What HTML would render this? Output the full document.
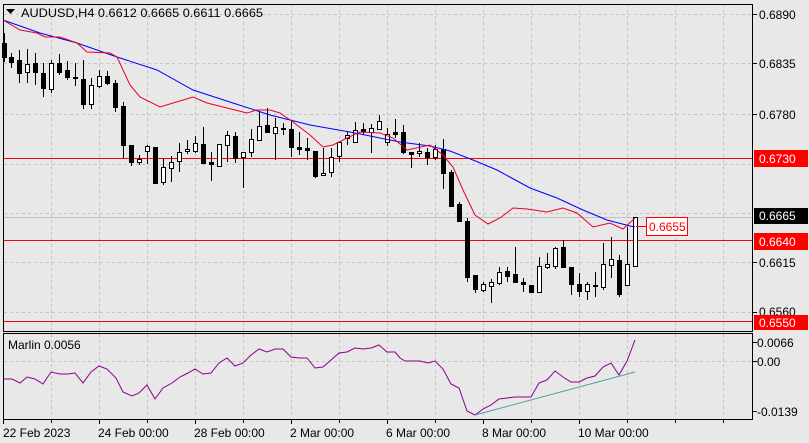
<!DOCTYPE html>
<html><head><meta charset="utf-8"><style>
html,body{margin:0;padding:0;background:#e8e8e8;width:809px;height:443px;overflow:hidden}
svg{display:block}
text{font-family:"Liberation Sans","DejaVu Sans",sans-serif;font-size:12px}
</style></head><body>
<svg width="809" height="443" viewBox="0 0 809 443" xmlns="http://www.w3.org/2000/svg">
<rect width="809" height="443" fill="#e8e8e8"/>
<g stroke="#c4c4c4" stroke-width="1" stroke-dasharray="3,3" shape-rendering="crispEdges">
<line x1="51.5" y1="4" x2="51.5" y2="419"/><line x1="99.5" y1="4" x2="99.5" y2="419"/><line x1="147.5" y1="4" x2="147.5" y2="419"/><line x1="195.5" y1="4" x2="195.5" y2="419"/><line x1="243.5" y1="4" x2="243.5" y2="419"/><line x1="291.5" y1="4" x2="291.5" y2="419"/><line x1="339.5" y1="4" x2="339.5" y2="419"/><line x1="387.5" y1="4" x2="387.5" y2="419"/><line x1="435.5" y1="4" x2="435.5" y2="419"/><line x1="483.5" y1="4" x2="483.5" y2="419"/><line x1="531.5" y1="4" x2="531.5" y2="419"/><line x1="579.5" y1="4" x2="579.5" y2="419"/><line x1="627.5" y1="4" x2="627.5" y2="419"/><line x1="675.5" y1="4" x2="675.5" y2="419"/><line x1="723.5" y1="4" x2="723.5" y2="419"/>
<line x1="4" y1="14.5" x2="752" y2="14.5"/><line x1="4" y1="63.5" x2="752" y2="63.5"/><line x1="4" y1="114.5" x2="752" y2="114.5"/><line x1="4" y1="164.5" x2="752" y2="164.5"/><line x1="4" y1="213.5" x2="752" y2="213.5"/><line x1="4" y1="262.5" x2="752" y2="262.5"/><line x1="4" y1="312.5" x2="752" y2="312.5"/>
<line x1="4" y1="361.5" x2="752" y2="361.5"/>
</g>
<line x1="4" y1="217.5" x2="752" y2="217.5" stroke="#c0c0c0" shape-rendering="crispEdges"/>
<g stroke="#ff0000" stroke-width="1" shape-rendering="crispEdges">
<line x1="4" y1="158.5" x2="752" y2="158.5"/>
<line x1="4" y1="240.5" x2="752" y2="240.5"/>
<line x1="4" y1="321.5" x2="752" y2="321.5"/>
</g>
<g stroke="#000" stroke-width="1" shape-rendering="crispEdges">
<line x1="4.5" y1="33" x2="4.5" y2="62"/><rect x="2.5" y="43.5" width="4" height="14" fill="#000"/>
<line x1="11.5" y1="53" x2="11.5" y2="68"/><rect x="9.5" y="57.5" width="4" height="5" fill="#000"/>
<line x1="19.5" y1="50" x2="19.5" y2="83"/><rect x="17.5" y="60.5" width="4" height="13" fill="#000"/>
<line x1="27.5" y1="49" x2="27.5" y2="83"/><rect x="25.5" y="64.5" width="4" height="8" fill="#fff"/>
<line x1="35.5" y1="53" x2="35.5" y2="85"/><rect x="33.5" y="63.5" width="4" height="9" fill="#000"/>
<line x1="43.5" y1="63" x2="43.5" y2="97"/><rect x="41.5" y="73.5" width="4" height="15" fill="#000"/>
<line x1="51.5" y1="60" x2="51.5" y2="93"/><rect x="49.5" y="63.5" width="4" height="26" fill="#fff"/>
<line x1="59.5" y1="54" x2="59.5" y2="75"/><rect x="57.5" y="63.5" width="4" height="9" fill="#000"/>
<line x1="67.5" y1="61" x2="67.5" y2="80"/><rect x="65.5" y="70.5" width="4" height="7" fill="#000"/>
<line x1="75.5" y1="63" x2="75.5" y2="86"/><rect x="73.5" y="77.5" width="4" height="1" fill="#000"/>
<line x1="83.5" y1="60" x2="83.5" y2="109"/><rect x="81.5" y="79.5" width="4" height="25" fill="#000"/>
<line x1="91.5" y1="78" x2="91.5" y2="109"/><rect x="89.5" y="85.5" width="4" height="19" fill="#fff"/>
<line x1="99.5" y1="70" x2="99.5" y2="88"/><rect x="97.5" y="76.5" width="4" height="10" fill="#fff"/>
<line x1="107.5" y1="71" x2="107.5" y2="85"/><rect x="105.5" y="76.5" width="4" height="7" fill="#000"/>
<line x1="115.5" y1="80" x2="115.5" y2="112"/><rect x="113.5" y="83.5" width="4" height="24" fill="#000"/>
<line x1="123.5" y1="102" x2="123.5" y2="158"/><rect x="121.5" y="106.5" width="4" height="39" fill="#000"/>
<line x1="131.5" y1="145" x2="131.5" y2="166"/><rect x="129.5" y="145.5" width="4" height="17" fill="#000"/>
<line x1="139.5" y1="155" x2="139.5" y2="165"/><rect x="137.5" y="159.5" width="4" height="3" fill="#fff"/>
<line x1="147.5" y1="145" x2="147.5" y2="164"/><rect x="145.5" y="146.5" width="4" height="5" fill="#fff"/>
<line x1="155.5" y1="147" x2="155.5" y2="183"/><rect x="153.5" y="147.5" width="4" height="36" fill="#000"/>
<line x1="163.5" y1="158" x2="163.5" y2="185"/><rect x="161.5" y="167.5" width="4" height="15" fill="#fff"/>
<line x1="171.5" y1="156" x2="171.5" y2="182"/><rect x="169.5" y="162.5" width="4" height="6" fill="#fff"/>
<line x1="179.5" y1="143" x2="179.5" y2="172"/><rect x="177.5" y="152.5" width="4" height="9" fill="#fff"/>
<line x1="187.5" y1="140" x2="187.5" y2="154"/><rect x="185.5" y="149.5" width="4" height="2" fill="#fff"/>
<line x1="195.5" y1="136" x2="195.5" y2="153"/><rect x="193.5" y="143.5" width="4" height="8" fill="#fff"/>
<line x1="203.5" y1="127" x2="203.5" y2="163"/><rect x="201.5" y="144.5" width="4" height="19" fill="#000"/>
<line x1="211.5" y1="152" x2="211.5" y2="181"/><rect x="209.5" y="162.5" width="4" height="2" fill="#000"/>
<line x1="219.5" y1="144" x2="219.5" y2="166"/><rect x="217.5" y="144.5" width="4" height="22" fill="#fff"/>
<line x1="227.5" y1="131" x2="227.5" y2="162"/><rect x="225.5" y="135.5" width="4" height="10" fill="#fff"/>
<line x1="235.5" y1="132" x2="235.5" y2="163"/><rect x="233.5" y="136.5" width="4" height="22" fill="#000"/>
<line x1="243.5" y1="152" x2="243.5" y2="188"/><rect x="241.5" y="152.5" width="4" height="5" fill="#fff"/>
<line x1="251.5" y1="129" x2="251.5" y2="157"/><rect x="249.5" y="139.5" width="4" height="13" fill="#fff"/>
<line x1="259.5" y1="112" x2="259.5" y2="140"/><rect x="257.5" y="126.5" width="4" height="14" fill="#fff"/>
<line x1="267.5" y1="108" x2="267.5" y2="133"/><rect x="265.5" y="125.5" width="4" height="7" fill="#000"/>
<line x1="275.5" y1="118" x2="275.5" y2="160"/><rect x="273.5" y="127.5" width="4" height="6" fill="#fff"/>
<line x1="283.5" y1="123" x2="283.5" y2="135"/><rect x="281.5" y="128.5" width="4" height="1" fill="#fff"/>
<line x1="291.5" y1="120" x2="291.5" y2="157"/><rect x="289.5" y="129.5" width="4" height="18" fill="#000"/>
<line x1="299.5" y1="132" x2="299.5" y2="155"/><rect x="297.5" y="147.5" width="4" height="2" fill="#000"/>
<line x1="307.5" y1="138" x2="307.5" y2="160"/><rect x="305.5" y="148.5" width="4" height="2" fill="#000"/>
<line x1="315.5" y1="151" x2="315.5" y2="178"/><rect x="313.5" y="151.5" width="4" height="25" fill="#000"/>
<line x1="323.5" y1="148" x2="323.5" y2="176"/><rect x="321.5" y="173.5" width="4" height="2" fill="#fff"/>
<line x1="331.5" y1="148" x2="331.5" y2="177"/><rect x="329.5" y="157.5" width="4" height="15" fill="#fff"/>
<line x1="339.5" y1="142" x2="339.5" y2="162"/><rect x="337.5" y="142.5" width="4" height="14" fill="#fff"/>
<line x1="347.5" y1="132" x2="347.5" y2="145"/><rect x="345.5" y="135.5" width="4" height="3" fill="#fff"/>
<line x1="355.5" y1="122" x2="355.5" y2="143"/><rect x="353.5" y="130.5" width="4" height="12" fill="#fff"/>
<line x1="363.5" y1="123" x2="363.5" y2="135"/><rect x="361.5" y="129.5" width="4" height="2" fill="#000"/>
<line x1="371.5" y1="124" x2="371.5" y2="153"/><rect x="369.5" y="128.5" width="4" height="4" fill="#fff"/>
<line x1="379.5" y1="115" x2="379.5" y2="130"/><rect x="377.5" y="121.5" width="4" height="8" fill="#fff"/>
<line x1="387.5" y1="128" x2="387.5" y2="146"/><rect x="385.5" y="134.5" width="4" height="8" fill="#fff"/>
<line x1="395.5" y1="119" x2="395.5" y2="138"/><rect x="393.5" y="132.5" width="4" height="2" fill="#000"/>
<line x1="403.5" y1="125" x2="403.5" y2="154"/><rect x="401.5" y="132.5" width="4" height="20" fill="#000"/>
<line x1="411.5" y1="152" x2="411.5" y2="168"/><rect x="409.5" y="152.5" width="4" height="2" fill="#000"/>
<line x1="419.5" y1="143" x2="419.5" y2="157"/><rect x="417.5" y="151.5" width="4" height="2" fill="#fff"/>
<line x1="427.5" y1="148" x2="427.5" y2="165"/><rect x="425.5" y="152.5" width="4" height="5" fill="#000"/>
<line x1="435.5" y1="145" x2="435.5" y2="160"/><rect x="433.5" y="149.5" width="4" height="8" fill="#fff"/>
<line x1="443.5" y1="139" x2="443.5" y2="189"/><rect x="441.5" y="149.5" width="4" height="24" fill="#000"/>
<line x1="451.5" y1="170" x2="451.5" y2="207"/><rect x="449.5" y="172.5" width="4" height="34" fill="#000"/>
<line x1="459.5" y1="202" x2="459.5" y2="222"/><rect x="457.5" y="204.5" width="4" height="17" fill="#000"/>
<line x1="467.5" y1="218" x2="467.5" y2="282"/><rect x="465.5" y="221.5" width="4" height="56" fill="#000"/>
<line x1="475.5" y1="275" x2="475.5" y2="293"/><rect x="473.5" y="275.5" width="4" height="14" fill="#000"/>
<line x1="483.5" y1="282" x2="483.5" y2="292"/><rect x="481.5" y="284.5" width="4" height="6" fill="#fff"/>
<line x1="491.5" y1="279" x2="491.5" y2="303"/><rect x="489.5" y="282.5" width="4" height="4" fill="#fff"/>
<line x1="499.5" y1="267" x2="499.5" y2="285"/><rect x="497.5" y="272.5" width="4" height="11" fill="#fff"/>
<line x1="507.5" y1="267" x2="507.5" y2="282"/><rect x="505.5" y="271.5" width="4" height="5" fill="#000"/>
<line x1="515.5" y1="247" x2="515.5" y2="283"/><rect x="513.5" y="274.5" width="4" height="8" fill="#000"/>
<line x1="523.5" y1="278" x2="523.5" y2="292"/><rect x="521.5" y="282.5" width="4" height="2" fill="#000"/>
<line x1="531.5" y1="285" x2="531.5" y2="292"/><rect x="529.5" y="285.5" width="4" height="7" fill="#000"/>
<line x1="539.5" y1="257" x2="539.5" y2="292"/><rect x="537.5" y="266.5" width="4" height="26" fill="#fff"/>
<line x1="547.5" y1="253" x2="547.5" y2="269"/><rect x="545.5" y="264.5" width="4" height="3" fill="#fff"/>
<line x1="555.5" y1="247" x2="555.5" y2="269"/><rect x="553.5" y="248.5" width="4" height="18" fill="#fff"/>
<line x1="563.5" y1="240" x2="563.5" y2="267"/><rect x="561.5" y="247.5" width="4" height="20" fill="#000"/>
<line x1="571.5" y1="267" x2="571.5" y2="295"/><rect x="569.5" y="267.5" width="4" height="17" fill="#000"/>
<line x1="579.5" y1="273" x2="579.5" y2="297"/><rect x="577.5" y="284.5" width="4" height="7" fill="#000"/>
<line x1="587.5" y1="282" x2="587.5" y2="300"/><rect x="585.5" y="284.5" width="4" height="7" fill="#fff"/>
<line x1="595.5" y1="272" x2="595.5" y2="297"/><rect x="593.5" y="285.5" width="4" height="1" fill="#fff"/>
<line x1="603.5" y1="243" x2="603.5" y2="290"/><rect x="601.5" y="264.5" width="4" height="23" fill="#fff"/>
<line x1="611.5" y1="237" x2="611.5" y2="278"/><rect x="609.5" y="259.5" width="4" height="6" fill="#fff"/>
<line x1="619.5" y1="255" x2="619.5" y2="297"/><rect x="617.5" y="260.5" width="4" height="34" fill="#000"/>
<line x1="627.5" y1="227" x2="627.5" y2="285"/><rect x="625.5" y="264.5" width="4" height="21" fill="#fff"/>
<line x1="635.5" y1="217" x2="635.5" y2="266"/><rect x="633.5" y="217.5" width="4" height="49" fill="#fff"/>
</g>
<polyline fill="none" stroke="#0000ff" stroke-width="1" points="3,20 40,33 77,43 117,57 157,70 193,90 233,103 270,115 310,125 350,132 400,142 430,146 450,151 473,160 497,170 530,188 557,198 583,210 607,220 630,226 635,227"/>
<polyline fill="none" stroke="#e8002a" stroke-width="1" points="3,20 20,30 37,33 45,37 60,37 77,43 87,52 110,53 117,57 130,85 140,97 160,107 173,103 193,97 207,103 227,108 247,113 257,110 270,110 280,113 293,122 310,135 323,147 333,145 347,138 360,132 380,133 393,138 407,150 430,145 443,155 453,167 463,190 475,215 488,224 500,218 513,208 527,209 547,212 563,208 577,213 593,227 610,223 623,229 635,218"/>
<line x1="636" y1="226.5" x2="647" y2="226.5" stroke="#ff0000"/>
<rect x="646.5" y="217.5" width="41" height="18" fill="#fff" stroke="#ff0000"/>
<text x="649" y="231" fill="#ff0000">0.6655</text>
<polyline fill="none" stroke="#8b008b" stroke-width="1" points="3,379 12,379 20,383 27,377 35,379 43,384 51,372 60,374 68,374 75,373 83,383 91,372 99,366 107,369 116,378 123,392 132,396 139,393 147,385 155,399 163,388 172,383 180,377 188,373 195,369 203,374 211,373 219,363 227,358 235,366 243,363 251,355 259,349 267,352 275,349 283,349 291,357 299,358 307,358 315,368 323,367 331,360 339,353 347,352 355,348 363,349 371,348 379,345 387,352 395,352 400,358 405,361 413,361 420,361 428,363 435,361 443,369 451,384 459,388 467,411 475,415 483,409 491,405 499,399 507,398 515,397 523,397 531,397 539,383 547,380 555,371 563,377 571,382 579,382 587,378 595,376 603,367 611,363 619,375 627,361 635,340"/>
<line x1="475" y1="415" x2="635" y2="372" stroke="#4f9f9f" stroke-width="1"/>
<g fill="none" stroke="#000" stroke-width="1" shape-rendering="crispEdges">
<rect x="3.5" y="4.5" width="749" height="327"/>
<rect x="3.5" y="333.5" width="749" height="86"/>
</g>
<g stroke="#000" shape-rendering="crispEdges">
<line x1="753" y1="14.5" x2="757" y2="14.5"/><line x1="753" y1="63.5" x2="757" y2="63.5"/><line x1="753" y1="114.5" x2="757" y2="114.5"/><line x1="753" y1="262.5" x2="757" y2="262.5"/><line x1="753" y1="312.5" x2="757" y2="312.5"/>
<line x1="753" y1="342.5" x2="757" y2="342.5"/><line x1="753" y1="361.5" x2="757" y2="361.5"/><line x1="753" y1="411.5" x2="757" y2="411.5"/>
<line x1="3.5" y1="420" x2="3.5" y2="424"/><line x1="51.5" y1="420" x2="51.5" y2="423"/><line x1="99.5" y1="420" x2="99.5" y2="424"/><line x1="147.5" y1="420" x2="147.5" y2="423"/><line x1="195.5" y1="420" x2="195.5" y2="424"/><line x1="243.5" y1="420" x2="243.5" y2="423"/><line x1="291.5" y1="420" x2="291.5" y2="424"/><line x1="339.5" y1="420" x2="339.5" y2="423"/><line x1="387.5" y1="420" x2="387.5" y2="424"/><line x1="435.5" y1="420" x2="435.5" y2="423"/><line x1="483.5" y1="420" x2="483.5" y2="424"/><line x1="531.5" y1="420" x2="531.5" y2="423"/><line x1="579.5" y1="420" x2="579.5" y2="424"/><line x1="627.5" y1="420" x2="627.5" y2="423"/><line x1="675.5" y1="420" x2="675.5" y2="423"/><line x1="723.5" y1="420" x2="723.5" y2="423"/>
</g>
<polygon points="6,9 15,9 10.5,14" fill="#000"/>
<text x="21" y="17" fill="#000" textLength="242" lengthAdjust="spacingAndGlyphs">AUDUSD,H4 0.6612 0.6665 0.6611 0.6665</text>
<text x="8" y="349" fill="#000">Marlin 0.0056</text>
<g fill="#000">
<text x="759" y="19">0.6890</text>
<text x="759" y="68">0.6835</text>
<text x="759" y="119">0.6780</text>
<text x="759" y="267">0.6615</text>
<text x="759" y="316">0.6560</text>
<text x="757" y="347">0.0066</text>
<text x="757" y="366">0.00</text>
<text x="757" y="416">-0.0139</text>
</g>
<rect x="754" y="150" width="54" height="17" fill="#ff0000"/><text x="759" y="163" fill="#fff">0.6730</text>
<rect x="754" y="208" width="54" height="16" fill="#000"/><text x="759" y="220" fill="#fff">0.6665</text>
<rect x="754" y="233" width="54" height="17" fill="#ff0000"/><text x="759" y="246" fill="#fff">0.6640</text>
<rect x="754" y="315" width="54" height="15" fill="#ff0000"/><text x="759" y="327" fill="#fff">0.6550</text>
<g fill="#000">
<text x="3" y="437">22 Feb 2023</text>
<text x="98" y="437">24 Feb 00:00</text>
<text x="194" y="437">28 Feb 00:00</text>
<text x="290" y="437">2 Mar 00:00</text>
<text x="386" y="437">6 Mar 00:00</text>
<text x="482" y="437">8 Mar 00:00</text>
<text x="578" y="437">10 Mar 00:00</text>
</g>
</svg>
</body></html>
